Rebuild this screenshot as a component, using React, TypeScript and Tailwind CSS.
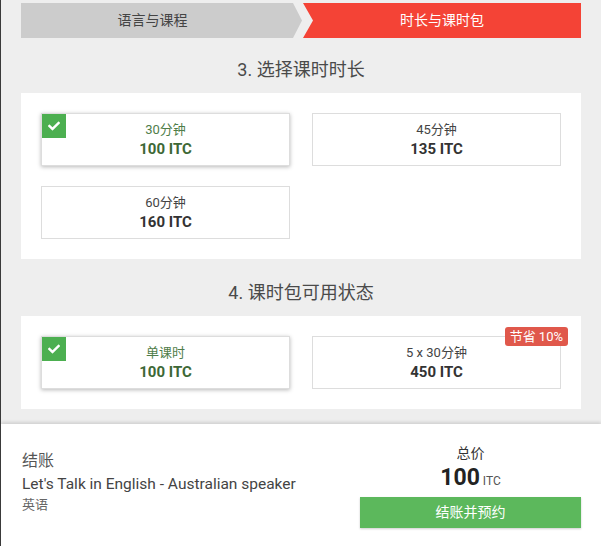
import { FaCheck } from "react-icons/fa";

type Option = {
  label: string;
  price: string;
  selected?: boolean;
  badge?: string;
};

const DURATIONS: Option[] = [
  { label: "30分钟", price: "100 ITC", selected: true },
  { label: "45分钟", price: "135 ITC" },
  { label: "60分钟", price: "160 ITC" },
];

const PACKAGES: Option[] = [
  { label: "单课时", price: "100 ITC", selected: true },
  { label: "5 x 30分钟", price: "450 ITC", badge: "节省 10%" },
];

function OptionCard({ option }: { option: Option }) {
  return (
    <div
      className={
        option.selected
          ? "relative h-[53px] flex flex-col items-center justify-center bg-white border border-[#dddddd] shadow-[0_1px_4px_rgba(0,0,0,0.28)]"
          : "relative h-[53px] flex flex-col items-center justify-center bg-white border border-[#dddddd]"
      }
    >
      {option.selected && (
        <span className="absolute left-0 top-0 w-6 h-6 flex items-center justify-center bg-[#4caf50] text-white">
          <FaCheck size={12} />
        </span>
      )}
      {option.badge && (
        <span className="absolute -right-[8px] -top-[10px] h-[19px] px-[5px] flex items-center rounded-[3px] bg-[#e0584b] text-white text-[13px] leading-none">
          {option.badge}
        </span>
      )}
      <span
        className={
          option.selected
            ? "text-[13px] leading-[18px] text-[#4f7d49]"
            : "text-[13px] leading-[18px] text-[#444444]"
        }
      >
        {option.label}
      </span>
      <span
        className={
          option.selected
            ? "text-[15px] leading-[20px] font-bold text-[#3d6836]"
            : "text-[15px] leading-[20px] font-bold text-[#333333]"
        }
      >
        {option.price}
      </span>
    </div>
  );
}

function Section({ title, options, first }: { title: string; options: Option[]; first?: boolean }) {
  return (
    <section>
      <h2
        className={
          first
            ? "pt-[21px] pb-[12px] text-center text-[18px] leading-[22px] text-[#4a4a4a]"
            : "pt-[23px] pb-[12px] text-center text-[18px] leading-[22px] text-[#4a4a4a]"
        }
      >
        {title}
      </h2>
      <div className="bg-white p-[20px] grid grid-cols-2 gap-x-[22px] gap-y-[20px]">
        {options.map((o) => (
          <OptionCard key={o.label} option={o} />
        ))}
      </div>
    </section>
  );
}

export default function App() {
  return (
    <div className="w-[601px] h-[546px] flex flex-col bg-[#eeeeee] border-l border-[#3a3a3a] font-['Roboto','Noto_Sans_CJK_SC',sans-serif] overflow-hidden">
      <div className="flex-1 pl-[20px] pr-[20px] pt-[3px]">
        {/* Stepper */}
        <div className="flex h-[35px] gap-px">
          <div className="w-[281px] flex items-center justify-center pr-[18px] bg-[#cccccc] text-[14px] text-[#444444] [clip-path:polygon(0_0,calc(100%-9px)_0,100%_50%,calc(100%-9px)_100%,0_100%)]">
            语言与课程
          </div>
          <div className="flex-1 flex items-center justify-center bg-[#f44336] text-[14px] text-white [clip-path:polygon(0_0,100%_0,100%_100%,0_100%,10px_50%)]">
            时长与课时包
          </div>
        </div>

        <Section title="3. 选择课时时长" options={DURATIONS} first />
        <Section title="4. 课时包可用状态" options={PACKAGES} />
      </div>

      {/* Checkout footer */}
      <footer className="mt-[15px] h-[122px] shrink-0 bg-white shadow-[0_-2px_3px_rgba(0,0,0,0.12)] flex justify-between pl-[21px] pr-[20px]">
        <div className="pt-[26px] flex flex-col">
          <span className="text-[16px] leading-[22px] text-[#555555]">结账</span>
          <span className="text-[15.5px] leading-[24px] text-[#444444]">
            Let's Talk in English - Australian speaker
          </span>
          <span className="text-[13px] leading-[18px] text-[#666666]">英语</span>
        </div>
        <div className="w-[221px] pt-[19px] flex flex-col items-center">
          <span className="text-[14px] leading-[20px] text-[#333333]">总价</span>
          <div className="flex items-baseline gap-[3px] h-[30px]">
            <span className="text-[23px] leading-[30px] font-bold text-[#222222]">100</span>
            <span className="text-[12px] text-[#555555]">ITC</span>
          </div>
          <button className="mt-[4px] w-full h-[31px] bg-[#5cb85c] text-white text-[14px] shadow-[0_1px_2px_rgba(0,0,0,0.2)]">
            结账并预约
          </button>
        </div>
      </footer>
    </div>
  );
}
